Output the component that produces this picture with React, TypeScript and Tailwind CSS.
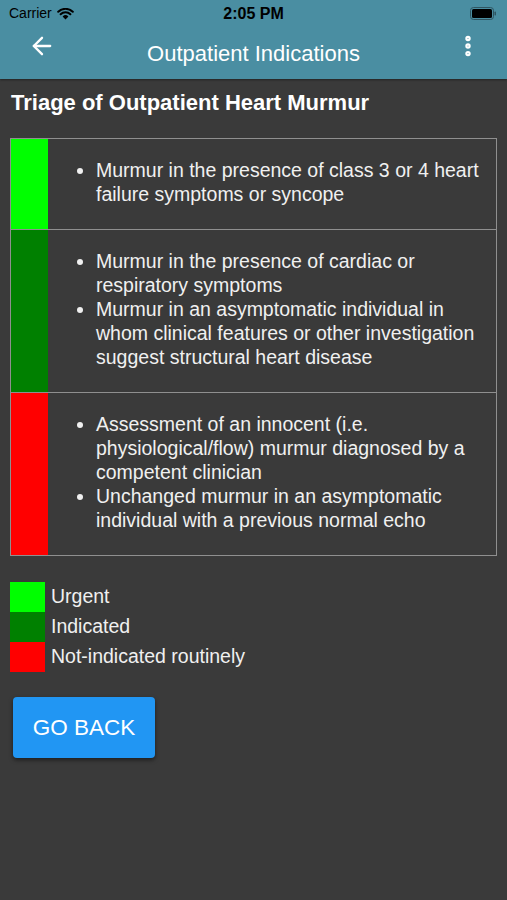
import { ArrowLeft, EllipsisVertical } from "lucide-react";

const rows = [
    {
        color: "bg-[#00ff00]",
        items: ["Murmur in the presence of class 3 or 4 heart failure symptoms or syncope"],
    },
    {
        color: "bg-[#008000]",
        items: [
            "Murmur in the presence of cardiac or respiratory symptoms",
            "Murmur in an asymptomatic individual in whom clinical features or other investigation suggest structural heart disease",
        ],
    },
    {
        color: "bg-[#ff0000]",
        items: [
            "Assessment of an innocent (i.e. physiological/flow) murmur diagnosed by a competent clinician",
            "Unchanged murmur in an asymptomatic individual with a previous normal echo",
        ],
    },
];

const legend = [
    { color: "bg-[#00ff00]", label: "Urgent" },
    { color: "bg-[#008000]", label: "Indicated" },
    { color: "bg-[#ff0000]", label: "Not-indicated routinely" },
];

function StatusBar() {
    return (
        <div className="relative flex h-[27px] items-center justify-between px-[9px] text-black">
            <div className="flex items-center gap-[5px] text-[14px]">
                <span>Carrier</span>
                <svg width="17" height="12" viewBox="0 0 17 12">
                    <path d="M8.5 11.5 L5.6 8.4 A4.2 4.2 0 0 1 11.4 8.4 Z" fill="black" />
                    <path d="M3.6 6.3 A7 7 0 0 1 13.4 6.3" stroke="black" strokeWidth="2" fill="none" strokeLinecap="round" />
                    <path d="M1.2 3.8 A10.5 10.5 0 0 1 15.8 3.8" stroke="black" strokeWidth="2" fill="none" strokeLinecap="round" />
                </svg>
            </div>
            <span className="absolute left-1/2 -translate-x-1/2 text-[16px] font-bold">2:05 PM</span>
            <svg width="27" height="13" viewBox="0 0 27 13" className="mr-[1px]">
                <rect x="0.5" y="0.5" width="23" height="12" rx="3" fill="none" stroke="#2f5561" />
                <rect x="2" y="2" width="20" height="9" rx="1.5" fill="black" />
                <rect x="24.5" y="4.5" width="1.5" height="4" rx="0.7" fill="#2f5561" />
            </svg>
        </div>
    );
}

export default function App() {
    return (
        <div
            className="min-h-[900px] w-[507px] bg-[#3a3a3a] text-[#f0f0f0]"
            style={{ fontFamily: '"Liberation Sans", Arial, sans-serif' }}
        >
            {/* ── Header ─────────────────────────────── */}
            <div className="h-[79px] bg-[#4a8ea2] shadow-[0_1px_2px_rgba(0,0,0,0.4)]">
                <StatusBar />
                <div className="relative flex h-[52px] items-center justify-between pl-[28px] pr-[26px]">
                    <ArrowLeft className="mb-[14px] h-[28px] w-[28px] text-white" strokeWidth={2} />
                    <span className="absolute left-1/2 -translate-x-1/2 text-[22px] text-white">
                        Outpatient Indications
                    </span>
                    <EllipsisVertical className="mb-[14px] h-[26px] w-[26px] text-white" strokeWidth={3} />
                </div>
            </div>

            <div className="px-[10px]">
                <h1 className="pt-[12px] pb-[23px] pl-[1px] text-[22px] font-bold leading-[24px] text-white">
                    Triage of Outpatient Heart Murmur
                </h1>

                {/* ── Table ───────────────────────────── */}
                <div className="w-[487px] border border-[#8f8f8f]">
                    {rows.map((row, i) => (
                        <div key={i} className={`flex ${i > 0 ? "border-t border-[#8f8f8f]" : ""}`}>
                            <div className={`w-[37px] shrink-0 ${row.color}`} />
                            <div className="flex-1 pt-[19px] pb-[23px] pl-[8px] pr-[4px]">
                                <ul className="list-disc pl-[40px] text-[19.5px] leading-[24px]">
                                    {row.items.map((t) => (
                                        <li key={t}>{t}</li>
                                    ))}
                                </ul>
                            </div>
                        </div>
                    ))}
                </div>

                {/* ── Legend ──────────────────────────── */}
                <div className="mt-[26px] flex flex-col">
                    {legend.map((l) => (
                        <div key={l.label} className="flex h-[30px] items-center gap-[6px]">
                            <span className={`h-[30px] w-[35px] ${l.color}`} />
                            <span className="text-[19.5px]">{l.label}</span>
                        </div>
                    ))}
                </div>

                <button className="ml-[3px] mt-[25px] h-[61px] w-[142px] rounded-[4px] bg-[#2196f3] text-[22.5px] text-white shadow-[0_2px_4px_rgba(0,0,0,0.5)]">
                    GO BACK
                </button>
            </div>
        </div>
    );
}
